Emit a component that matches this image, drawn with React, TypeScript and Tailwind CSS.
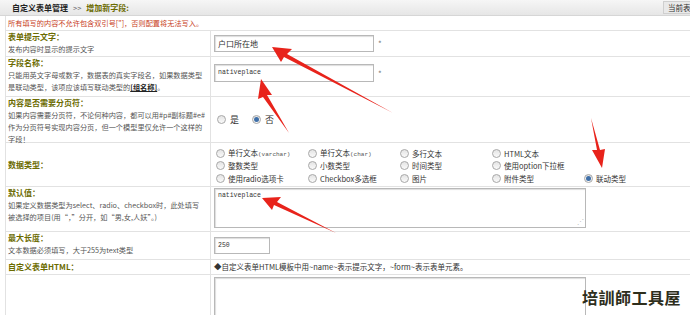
import React from 'react'

const cjk = { fontFamily: '"Noto Sans CJK SC", "Noto Sans", sans-serif' }
const mono = { fontFamily: '"Liberation Mono", "Noto Sans CJK SC", monospace' }

function Radio({ checked = false }: { checked?: boolean }) {
  return (
    <span className="inline-flex w-[9px] h-[9px] shrink-0 items-center justify-center rounded-full border border-[#a8a8a8] bg-gradient-to-b from-[#e4e4e4] to-[#fafafa]">
      {checked && <span className="w-[5px] h-[5px] rounded-full bg-[#3f6fa8]" />}
    </span>
  )
}

function Label({ title, children }: { title: React.ReactNode; children?: React.ReactNode }) {
  return (
    <div className="pl-[2px] whitespace-nowrap">
      <div className="text-[8px] leading-[12px] font-bold text-[#6b6b00]">{title}</div>
      {children && <div className="text-[7.2px] leading-[12px] text-[#555]">{children}</div>}
    </div>
  )
}

const types = [
  [['单行文本', '(varchar)'], ['单行文本', '(char)'], ['多行文本', ''], ['HTML文本', ''], null],
  [['整数类型', ''], ['小数类型', ''], ['时间类型', ''], ['使用option下拉框', ''], null],
  [['使用radio选项卡', ''], ['Checkbox多选框', ''], ['图片', ''], ['附件类型', ''], ['联动类型', '']],
] as const

function Row({ h, left, children }: { h: string; left: React.ReactNode; children?: React.ReactNode }) {
  return (
    <div className={`flex border-b border-[#e2e2e2] ${h}`}>
      <div className="w-[205px] shrink-0 border-r border-[#e2e2e2]">{left}</div>
      <div className="flex-1 min-w-0">{children}</div>
    </div>
  )
}

export default function App() {
  return (
    <div className="relative w-[690px] h-[315px] overflow-hidden bg-white text-[#333]" style={cjk}>
      {/* title bar */}
      <div className="relative h-[16px] bg-gradient-to-b from-[#f6f6f6] to-[#e6e6e6] border-b border-[#d6d6d6] flex items-center pl-[12px]">
        <span className="text-[8px] font-bold text-[#222]">自定义表单管理</span>
        <span className="text-[7.5px] text-[#666] mx-[5px]">&gt;&gt;</span>
        <span className="text-[8px] font-bold text-[#6b6b00]">增加新字段:</span>
        <div className="absolute left-[663px] top-[1px] h-[13px] w-[40px] bg-[#e9e9e9] border border-[#cfcfcf] text-[7.5px] leading-[11px] pl-[4px] text-[#333] whitespace-nowrap">
          当前表单
        </div>
      </div>

      <div className="ml-[5px] border-l border-[#e2e2e2]">
        <div className="h-[15px] border-b border-[#e2e2e2] pl-[2px] text-[7.2px] leading-[14px] text-[#c8401c] whitespace-nowrap">
          所有填写的内容不允许包含双引号["]，否则配置将无法写入。
        </div>

        <Row h="h-[26px]" left={<Label title="表单提示文字：">发布内容时显示的提示文字</Label>}>
          <div className="flex items-center h-full pl-[3px]">
            <div className="w-[160px] h-[17px] border border-[#b8b8b8] shadow-[inset_1px_1px_1px_#ddd] text-[8px] leading-[15px] pl-[3px]">户口所在地</div>
            <span className="ml-[4px] text-[8px] text-[#777]">*</span>
          </div>
        </Row>

        <Row
          h="h-[40px]"
          left={
            <Label title="字段名称：">
              只能用英文字母或数字，数据表的真实字段名，如果数据类型
              <br />
              是联动类型，该项应该填写联动类型的<span className="font-bold text-[#222] underline">[组名称]</span>。
            </Label>
          }
        >
          <div className="flex items-start h-full pl-[3px] pt-[7px]">
            <div className="w-[160px] h-[18px] border border-[#b8b8b8] shadow-[inset_1px_1px_1px_#ddd] text-[6.5px] leading-[16px] pl-[3px] text-[#333]" style={mono}>nativeplace</div>
            <span className="ml-[4px] mt-[4px] text-[8px] text-[#777]">*</span>
          </div>
        </Row>

        <Row
          h="h-[46px]"
          left={
            <Label title="内容是否需要分页符：">
              如果内容需要分页符，不论何种内容，都可以用#p#副标题#e#
              <br />
              作为分页符号实现内容分页，但一个模型里仅允许一个这样的
              <br />
              字段！
            </Label>
          }
        >
          <div className="flex items-center h-full pl-[6px] text-[9px] gap-[4px]">
            <Radio />
            <span>是</span>
            <span className="w-[5px]" />
            <Radio checked />
            <span>否</span>
          </div>
        </Row>

        <Row
          h="h-[44px]"
          left={
            <div className="h-full flex items-center pl-[2px] text-[8px] font-bold text-[#6b6b00]">数据类型：</div>
          }
        >
          <div className="pl-[5px] pt-[4px]">
            {types.map((row, i) => (
              <div key={i} className="grid grid-cols-[92px_92px_92px_92px_92px] h-[12.5px] items-center">
                {row.map((t, j) =>
                  t ? (
                    <div key={j} className="flex items-center gap-[3px] whitespace-nowrap text-[7.5px] text-[#333]">
                      <Radio checked={i === 2 && j === 4} />
                      <span>
                        {t[0]}
                        {t[1] && <span className="text-[6px] text-[#555]" style={mono}>{t[1]}</span>}
                      </span>
                    </div>
                  ) : (
                    <div key={j} />
                  )
                )}
              </div>
            ))}
          </div>
        </Row>

        <Row
          h="h-[45px]"
          left={
            <Label title="默认值：">
              如果定义数据类型为select、radio、checkbox时，此处填写
              <br />
              被选择的项目(用“，”分开，如“男,女,人妖”。)
            </Label>
          }
        >
          <div className="pl-[3px] pt-[1px]">
            <div className="relative w-[372px] h-[40px] border border-[#b8b8b8] shadow-[inset_1px_1px_1px_#ddd] text-[6.5px] leading-[14px] pl-[3px]" style={mono}>
              nativeplace
              <span className="absolute right-[1px] bottom-[1px] text-[7px] leading-[7px] text-[#bbb]">⋰</span>
            </div>
          </div>
        </Row>

        <Row h="h-[28px]" left={<Label title="最大长度：">文本数据必须填写，大于255为text类型</Label>}>
          <div className="flex items-center h-full pl-[3px]">
            <div className="w-[56px] h-[17px] border border-[#b8b8b8] shadow-[inset_1px_1px_1px_#ddd] text-[6.5px] leading-[15px] pl-[3px]" style={mono}>250</div>
          </div>
        </Row>

        <Row
          h="h-[15px]"
          left={<div className="pl-[2px] text-[8px] leading-[14px] font-bold text-[#6b6b00]">自定义表单HTML：</div>}
        >
          <div className="pl-[3px] text-[7.5px] leading-[14px] text-[#333] whitespace-nowrap">
            ◆自定义表单HTML模板中用~name~表示提示文字，~form~表示表单元素。
          </div>
        </Row>

        <Row h="h-[60px]" left={null}>
          <div className="pl-[3px] pt-[2px]">
            <div className="w-[372px] h-[60px] border border-[#b8b8b8] shadow-[inset_1px_1px_1px_#ddd]" />
          </div>
        </Row>
      </div>

      {/* watermark */}
      <div className="absolute left-[582px] top-[285px] text-[16px] font-bold tracking-[0.5px] text-[#2e2e1c]" style={cjk}>
        培訓師工具屋
      </div>

      {/* red arrows */}
      <svg className="absolute inset-0 pointer-events-none" width="690" height="315" viewBox="0 0 690 315">
        <g fill="#e8231b">
          <polygon points="272,47 292,49 287,54 393,113 284,57 281,62" />
          <polygon points="261,79 272,95 267,95 289,133 263,97 258,99" />
          <polygon points="602,168 592,150 597,150 591,118 600,150 605,149" />
          <polygon points="262,198 281,197 277,202 336,233 274,205 272,210" />
        </g>
      </svg>
    </div>
  )
}
